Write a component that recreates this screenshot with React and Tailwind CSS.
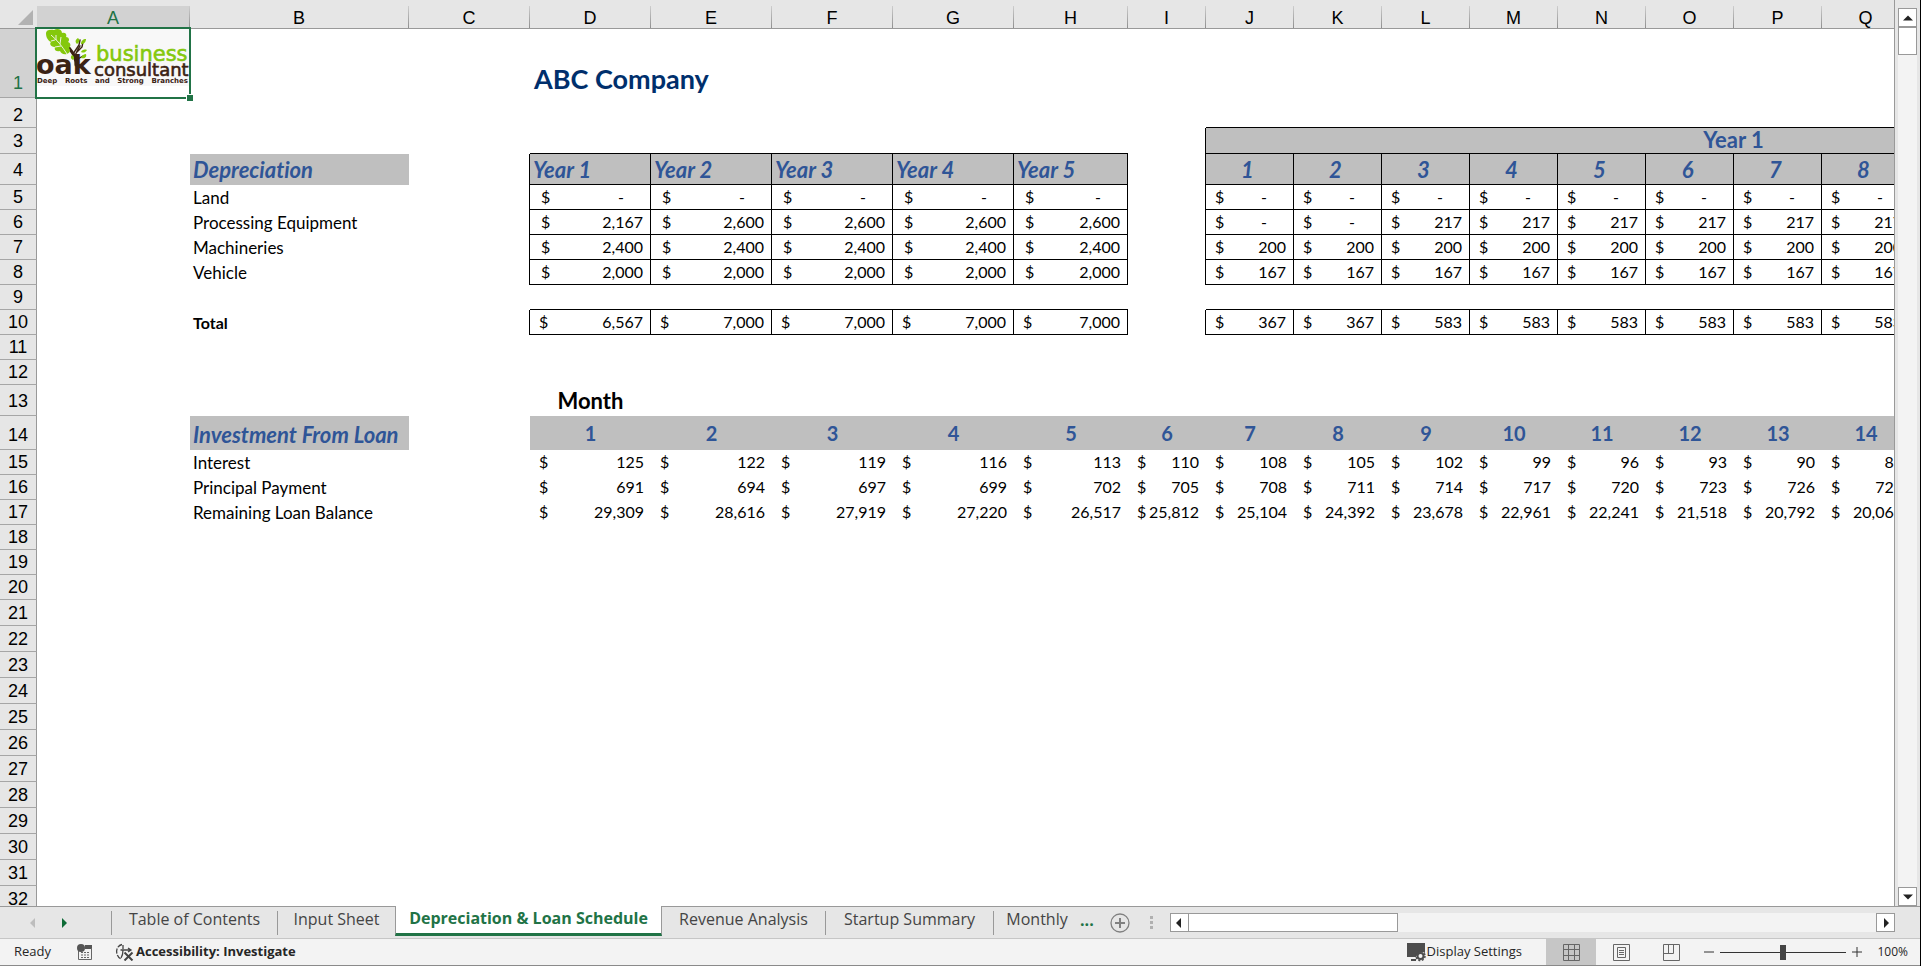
import clsx from 'clsx'

const COLUMNS = [
  { name: 'A', width: 'w-[153px]' },
  { name: 'B', width: 'w-[219px]' },
  { name: 'C', width: 'w-[121px]' },
  { name: 'D', width: 'w-[121px]' },
  { name: 'E', width: 'w-[121px]' },
  { name: 'F', width: 'w-[121px]' },
  { name: 'G', width: 'w-[121px]' },
  { name: 'H', width: 'w-[114px]' },
  { name: 'I', width: 'w-[78px]' },
  { name: 'J', width: 'w-[88px]' },
  { name: 'K', width: 'w-[88px]' },
  { name: 'L', width: 'w-[88px]' },
  { name: 'M', width: 'w-[88px]' },
  { name: 'N', width: 'w-[88px]' },
  { name: 'O', width: 'w-[88px]' },
  { name: 'P', width: 'w-[88px]' },
  { name: 'Q', width: 'w-[88px]' },
  { name: '', width: 'w-[352px]' },
]

const YEARS = ['Year 1', 'Year 2', 'Year 3', 'Year 4', 'Year 5']
const MONTHS = ['1', '2', '3', '4', '5', '6', '7', '8']

const DEPRECIATION = [
  { row: 5, label: 'Land', years: ['-', '-', '-', '-', '-'], months: ['-', '-', '-', '-', '-', '-', '-', '-'] },
  { row: 6, label: 'Processing Equipment', years: ['2,167', '2,600', '2,600', '2,600', '2,600'], months: ['-', '-', '217', '217', '217', '217', '217', '217'] },
  { row: 7, label: 'Machineries', years: ['2,400', '2,400', '2,400', '2,400', '2,400'], months: ['200', '200', '200', '200', '200', '200', '200', '200'] },
  { row: 8, label: 'Vehicle', years: ['2,000', '2,000', '2,000', '2,000', '2,000'], months: ['167', '167', '167', '167', '167', '167', '167', '167'] },
]

const TOTAL = {
  years: ['6,567', '7,000', '7,000', '7,000', '7,000'],
  months: ['367', '367', '583', '583', '583', '583', '583', '583'],
}

const LOAN_MONTHS = ['1', '2', '3', '4', '5', '6', '7', '8', '9', '10', '11', '12', '13', '14']

const LOAN = [
  { row: 15, label: 'Interest', values: ['125', '122', '119', '116', '113', '110', '108', '105', '102', '99', '96', '93', '90', '87'] },
  { row: 16, label: 'Principal Payment', values: ['691', '694', '697', '699', '702', '705', '708', '711', '714', '717', '720', '723', '726', '729'] },
  { row: 17, label: 'Remaining Loan Balance', values: ['29,309', '28,616', '27,919', '27,220', '26,517', '25,812', '25,104', '24,392', '23,678', '22,961', '22,241', '21,518', '20,792', '20,063'] },
]

const TABS = [
  { name: 'Table of Contents', width: 'w-[166px]' },
  { name: 'Input Sheet', width: 'w-[117px]' },
  { name: 'Depreciation & Loan Schedule', width: 'w-[267px]', active: true },
  { name: 'Revenue Analysis', width: 'w-[164px]' },
  { name: 'Startup Summary', width: 'w-[168px]' },
  { name: 'Monthly', width: 'w-[86px]', last: true },
]

const HEADING = 'leading-[24px] font-bold text-[#2f5597]'
const GRAY = 'bg-[#bfbfbf]'

function Row({ n, height = 'h-[25px]', tall, selected, children }) {
  return (
    <tr className={height}>
      <th
        scope="row"
        className={clsx(
          'p-0 align-bottom border-r border-b border-r-[#999] border-b-[#a6a6a6] font-[Liberation_Sans] text-[18px] leading-[22px] font-normal',
          tall ? 'pb-[3px]' : 'pb-px',
          selected ? 'bg-[#d2d2d2] text-[#217346]' : 'bg-[#e6e6e6] text-black',
        )}
      >
        {n}
      </th>
      {children}
    </tr>
  )
}

function Blank({ span = 1, right, bottom }) {
  return <td colSpan={span} className={clsx('p-0', right && 'border-r border-black', bottom && 'border-b border-black')} />
}

function Label({ children, bold }) {
  return (
    <td className={clsx('p-0 pb-px pl-[3px] align-bottom leading-[22px] whitespace-nowrap', bold ? 'text-[16px] font-bold' : 'text-[17px]')}>
      {children}
    </td>
  )
}

function Title({ children }) {
  return (
    <td className={clsx(GRAY, HEADING, 'p-0 pb-[3px] pl-[3px] align-bottom text-[22px] italic whitespace-nowrap')}>
      {children}
    </td>
  )
}

function Money({ value, boxed, indent }) {
  return (
    <td className={clsx('p-0 align-bottom text-[16px] leading-[22px]', boxed ? 'border-r border-b border-black pb-px' : 'pb-[2px]')}>
      <div className={clsx('flex justify-between', indent ? 'pl-[11px]' : 'pl-[9px]', value === '-' ? 'pr-[26px]' : 'pr-[7px]')}>
        <span>$</span>
        <span>{value}</span>
      </div>
    </td>
  )
}

function Logo() {
  return (
    <div className="h-[57px] overflow-hidden bg-[#f8f8f8] text-[#3b2314]">
      <svg viewBox="0 0 152 48" className="block h-[48px] w-[152px] overflow-visible" fontFamily="DejaVu Sans">
        <text x="-1" y="45" fontSize="27" fontWeight="700" fill="#3b2314">oak</text>
        <text x="59" y="32" fontSize="21" fill="#84c80c" stroke="#84c80c" strokeWidth="0.6">business</text>
        <text x="57" y="47" fontSize="18" fill="#3b2314" stroke="#3b2314" strokeWidth="0.6">consultant</text>
        <g fill="none" stroke="#3b2314" strokeLinecap="round">
          <path d="M39 36c0-6-1-9-4-13l-3-4" strokeWidth="3" />
          <path d="M38 30c0-7 3-9 5-13M40 23l5-5 1-5M36 25l6-9 1-5M34 22l-3-2M39 31l7-4" strokeWidth="1.4" />
        </g>
        <g fill="#84c80c">
          <path d="M30 25c-4 1-6-1-7-3-4 1-6-1-5-4-4 0-6-3-4-5-4-2-5-6-5-9 0-3 4-4 8-3 3-2 8-1 8 3 4-1 5 2 4 4 3 0 4 3 2 5 3 1 3 4 1 6 2 2 1 5-2 6z" />
          <path d="M40 15c-2-2-2-4 1-6 2 2 2 4-1 6zM44 15c0-3 2-5 5-5 0 3-2 5-5 5zM44 23c1-2 3-3 6-2-2 3-4 3-6 2zM44 29c1-3 3-4 5-4 1 3-1 5-5 4zM36 31c-2-1-3-3-1-5 2 1 3 3 1 5z" />
        </g>
        <path d="M14 6c6 5 11 11 16 19M19 11l0-5M23 15l1-7M18 11l-4 1M24 17l-6 1" fill="none" stroke="#f8f8f8" strokeWidth="0.9" />
      </svg>
      <div className="flex justify-between pr-[2px] font-[DejaVu_Sans] text-[7px] leading-[8px] font-semibold">
        <span>Deep</span>
        <span>Roots</span>
        <span>and</span>
        <span>Strong</span>
        <span>Branches</span>
      </div>
    </div>
  )
}

function Sheet() {
  return (
    <table className="w-0 table-fixed border-separate border-spacing-0 font-[Lato,sans-serif] text-black [font-variant-ligatures:none]">
      <colgroup>
        <col className="w-[37px]" />
        {COLUMNS.map((c) => (
          <col key={c.name} className={c.width} />
        ))}
      </colgroup>
      <thead>
        <tr className="h-[29px] bg-[#e6e6e6]">
          <th className="border-b border-[#999] p-0 align-bottom">
            <svg viewBox="0 0 15 15" className="mb-[3px] ml-[18px] h-[15px] w-[15px]">
              <path d="M15 0v15H0z" fill="#b2b2b2" />
            </svg>
          </th>
          {COLUMNS.map((c) => (
            <th key={c.name} scope="col" className="border-b border-[#999] p-0 align-bottom font-[Liberation_Sans] text-[18px] font-normal">
              <div
                className={clsx(
                  'h-[22px] border-r leading-[24px] [border-image:linear-gradient(to_bottom,#d0d0d0,#8c8c8c)_1]',
                  c.name === 'A' && 'bg-[#d2d2d2] text-[#217346]',
                )}
              >
                {c.name}
              </div>
            </th>
          ))}
        </tr>
      </thead>
      <tbody>
        <Row n={1} height="h-[69px]" tall selected>
          <td className="relative p-0 align-top">
            <Logo />
            <div className="absolute -top-[2px] -right-[1px] -bottom-[1px] -left-[2px] border-2 border-[#217346]" />
            <div className="absolute -right-[3px] -bottom-[3px] h-[7px] w-[7px] border-t border-l border-white bg-[#217346]" />
          </td>
          <Blank span={2} />
          <td colSpan={5} className="p-0 pb-[3px] pl-[4px] align-bottom text-[27px] leading-[32px] font-bold text-[#002f6c]">
            ABC Company
          </td>
        </Row>
        <Row n={2} height="h-[30px]">
          <Blank span={9} />
          <Blank span={9} bottom />
        </Row>
        <Row n={3} height="h-[26px]">
          <Blank span={3} />
          <Blank span={5} bottom />
          <Blank right />
          <td colSpan={9} className={clsx(GRAY, HEADING, 'border-r border-b border-black p-0 text-center align-top text-[22px]')}>
            Year 1
          </td>
        </Row>
        <Row n={4} height="h-[31px]" tall>
          <Blank />
          <Title>Depreciation</Title>
          <Blank right />
          {YEARS.map((y) => (
            <td key={y} className={clsx(GRAY, HEADING, 'border-r border-b border-black p-0 pb-[2px] pl-[3px] align-bottom text-[22px] italic')}>
              {y}
            </td>
          ))}
          <Blank right />
          {MONTHS.map((m) => (
            <td key={m} className={clsx(GRAY, HEADING, 'border-r border-b border-black p-0 pr-1 pb-[2px] text-center align-bottom text-[22px] italic')}>
              {m}
            </td>
          ))}
        </Row>
        {DEPRECIATION.map((r) => (
          <Row key={r.row} n={r.row}>
            <Blank />
            <Label>{r.label}</Label>
            <Blank right />
            {r.years.map((v, i) => (
              <Money key={i} value={v} boxed indent />
            ))}
            <Blank right />
            {r.months.map((v, i) => (
              <Money key={i} value={v} boxed />
            ))}
          </Row>
        ))}
        <Row n={9}>
          <Blank span={3} />
          <Blank span={5} bottom />
          <Blank />
          <Blank span={9} bottom />
        </Row>
        <Row n={10}>
          <Blank />
          <Label bold>Total</Label>
          <Blank right />
          {TOTAL.years.map((v, i) => (
            <Money key={i} value={v} boxed />
          ))}
          <Blank right />
          {TOTAL.months.map((v, i) => (
            <Money key={i} value={v} boxed />
          ))}
        </Row>
        <Row n={11} />
        <Row n={12} />
        <Row n={13} height="h-[31px]" tall>
          <Blank span={3} />
          <td className="p-0 pb-[3px] text-center align-bottom text-[22px] leading-[24px] font-bold">Month</td>
        </Row>
        <Row n={14} height="h-[34px]" tall>
          <Blank />
          <Title>Investment From Loan</Title>
          <Blank />
          {LOAN_MONTHS.map((m) => (
            <td key={m} className={clsx(GRAY, HEADING, 'p-0 text-center align-middle text-[20px]')}>
              {m}
            </td>
          ))}
        </Row>
        {LOAN.map((r) => (
          <Row key={r.row} n={r.row}>
            <Blank />
            <Label>{r.label}</Label>
            <Blank />
            {r.values.map((v, i) => (
              <Money key={i} value={v} />
            ))}
          </Row>
        ))}
        <Row n={18} />
        <Row n={19} />
        <Row n={20} />
        {[21, 22, 23, 24, 25, 26, 27, 28, 29, 30, 31, 32].map((n) => (
          <Row key={n} n={n} height="h-[26px]" />
        ))}
      </tbody>
    </table>
  )
}

function ScrollButton({ label, d }) {
  return (
    <button aria-label={label} className="flex h-[19px] w-[19px] shrink-0 items-center justify-center border border-[#999] bg-white">
      <svg viewBox="0 0 10 10" className="h-[10px] w-[10px]">
        <path d={d} fill="#222" />
      </svg>
    </button>
  )
}

function VerticalScroll() {
  return (
    <div className="flex w-[26px] shrink-0 flex-col border-l border-[#999] bg-[#e6e6e6] pt-[8px] pl-[3px]">
      <div className="flex w-[19px] flex-1 flex-col bg-[#f3f3f3]">
        <ScrollButton label="Scroll up" d="M0 7.5l5-5 5 5z" />
        <div className="h-[28px] border border-[#999] bg-white" />
        <div className="flex-1" />
        <ScrollButton label="Scroll down" d="M0 2.5l5 5 5-5z" />
      </div>
    </div>
  )
}

function TabBar() {
  return (
    <div className="flex h-[32px] shrink-0 items-start border-t border-[#999] bg-[#e6e6e6] font-[Open_Sans,sans-serif] text-[16px]">
      <div className="flex h-[28px] w-[112px] shrink-0 items-end pb-[7px] pl-[30px]">
        <button aria-label="Previous sheet">
          <svg viewBox="0 0 5 10" className="h-[10px] w-[5px]">
            <path d="M5 0v10L0 5z" fill="#bdbdbd" />
          </svg>
        </button>
        <button aria-label="Next sheet" className="ml-[27px]">
          <svg viewBox="0 0 5 10" className="h-[10px] w-[5px]">
            <path d="M0 0v10l5-5z" fill="#0e6b37" />
          </svg>
        </button>
        <span className="ml-auto -mb-[7px] h-[24px] border-r border-[#999]" />
      </div>
      {TABS.map((t, i) => (
        <button
          key={t.name}
          className={clsx(
            'shrink-0 whitespace-nowrap',
            t.width,
            t.active
              ? '-mt-px h-[30px] border-r border-b-3 border-l border-r-[#999] border-b-[#217346] border-l-[#999] bg-white pb-[3px] font-bold text-[#217346]'
              : 'h-[28px] text-[#444]',
          )}
        >
          {t.active ? (
            t.name
          ) : (
            <span
              className={clsx(
                'mt-[4px] block h-[24px] leading-[16px]',
                !t.last && !TABS[i + 1].active && 'border-r border-[#999]',
              )}
            >
              {t.name}
            </span>
          )}
        </button>
      ))}
      <button aria-label="More sheets" className="mt-[4px] leading-[18px] font-bold text-[#217346]">...</button>
      <button aria-label="New sheet" className="mt-[6px] ml-[16px]">
        <svg viewBox="0 0 20 20" className="h-[20px] w-[20px]" fill="none" stroke="#808080">
          <circle cx="10" cy="10" r="9" strokeWidth="1.3" />
          <path d="M10 5v10M5 10h10" strokeWidth="2" />
        </svg>
      </button>
      <svg viewBox="0 0 3 14" className="mt-[9px] ml-[20px] h-[14px] w-[3px]" fill="#b0b0b0">
        <path d="M0 0h3v3H0zM0 5h3v3H0zM0 10h3v3H0z" />
      </svg>
      <div className="mt-[6px] mr-[25px] ml-[17px] flex flex-1 bg-[#f3f3f3]">
        <ScrollButton label="Scroll left" d="M7 0v10L2 5z" />
        <div className="h-[19px] w-[209px] border border-l-0 border-[#999] bg-white" />
        <div className="flex-1" />
        <ScrollButton label="Scroll right" d="M3 0v10l5-5z" />
      </div>
    </div>
  )
}

function StatusBar() {
  return (
    <div className="flex h-[28px] shrink-0 items-stretch border-t border-b border-t-[#c6c6c6] border-b-[#8a8a8a] bg-[#f3f3f3] font-[Open_Sans,sans-serif] text-[13px] text-[#262626]">
      <span className="w-[63px] self-center pl-[14px]">Ready</span>
      <button aria-label="Record macro" className="pl-[14px]">
        <svg viewBox="0 0 16 16" className="h-[16px] w-[16px]">
          <path d="M8 1h7v4H8z" fill="#555" />
          <path d="M1.500 7v8.500h13V4" fill="none" stroke="#666" />
          <circle cx="4" cy="4" r="4" fill="#555" />
          <path d="M4 8.500h9M4 11h9M4 13.500h9" stroke="#666" strokeDasharray="2 1" />
        </svg>
      </button>
      <button className="ml-[22px] flex items-center gap-[2px] font-bold">
        <svg viewBox="0 0 19 18" className="h-[18px] w-[19px]" fill="none" stroke="#444">
          <path d="M7 1.500C0 3 0 13 6 16" strokeWidth="1.300" strokeDasharray="5 1.500" />
          <path d="M8 2v4M5.500 7h10M13 5l3 2-3 2M8 7c0 4 0 5-2 8" strokeWidth="1.300" />
          <path d="M9.500 9.500l8 8M17.500 9.500l-8 8" strokeWidth="2" />
        </svg>
        Accessibility: Investigate
      </button>
      <div className="flex-1" />
      <button className="flex items-center gap-px">
        <svg viewBox="0 0 20 20" className="h-[20px] w-[20px]">
          <path d="M1 1h18v10a6 6 0 0 0-9 4H1z" fill="#4d4d4d" />
          <path d="M5 17h5v2H5z" fill="#4d4d4d" />
          <circle cx="14.500" cy="14" r="3" fill="none" stroke="#4d4d4d" strokeWidth="2" />
          <circle cx="14.500" cy="14" r="4.500" fill="none" stroke="#4d4d4d" strokeWidth="1.500" strokeDasharray="2 1.530" />
        </svg>
        Display Settings
      </button>
      <button aria-label="Normal view" className="ml-[24px] flex w-[50px] items-center justify-center bg-[#c6c6c6]">
        <svg viewBox="0 0 17 17" className="h-[17px] w-[17px]" fill="none" stroke="#666">
          <path d="M.5.5h16v16H.5zM5.500.5v16M11.500.5v16M.5 5.500h16M.5 11.500h16" />
        </svg>
      </button>
      <button aria-label="Page layout view" className="flex w-[50px] items-center justify-center">
        <svg viewBox="0 0 17 17" className="h-[17px] w-[17px]" fill="none" stroke="#666">
          <path d="M.5.5h16v16H.5zM4.500 3.500h8v10h-8zM6 6.500h5M6 8.500h5M6 10.500h5" />
        </svg>
      </button>
      <button aria-label="Page break preview" className="flex w-[50px] items-center justify-center">
        <svg viewBox="0 0 17 17" className="h-[17px] w-[17px]" fill="none" stroke="#666">
          <path d="M.5.5h16v16H.5zM.5 9.500h10v-9M5.500.5v9" />
        </svg>
      </button>
      <button aria-label="Zoom out" className="ml-[8px]">
        <svg viewBox="0 0 10 10" className="h-[10px] w-[10px]">
          <path d="M0 5h10" stroke="#333" />
        </svg>
      </button>
      <input
        type="range"
        aria-label="Zoom"
        min="0"
        max="100"
        defaultValue="50"
        className="mx-[6px] w-[126px] appearance-none bg-transparent [&::-webkit-slider-runnable-track]:h-px [&::-webkit-slider-runnable-track]:bg-[#333] [&::-webkit-slider-thumb]:-mt-[7px] [&::-webkit-slider-thumb]:h-[15px] [&::-webkit-slider-thumb]:w-[6px] [&::-webkit-slider-thumb]:appearance-none [&::-webkit-slider-thumb]:bg-[#444]"
      />
      <button aria-label="Zoom in">
        <svg viewBox="0 0 10 10" className="h-[10px] w-[10px]">
          <path d="M0 5h10M5 0v10" stroke="#333" />
        </svg>
      </button>
      <button className="w-[58px] pr-[12px] text-right text-[12px]">100%</button>
    </div>
  )
}

export default function App() {
  return (
    <div className="flex h-screen flex-col overflow-hidden border-r border-black bg-[#e6e6e6]">
      <div className="flex min-h-0 flex-1">
        <div className="min-w-0 flex-1 overflow-hidden bg-white">
          <Sheet />
        </div>
        <VerticalScroll />
      </div>
      <TabBar />
      <StatusBar />
    </div>
  )
}
